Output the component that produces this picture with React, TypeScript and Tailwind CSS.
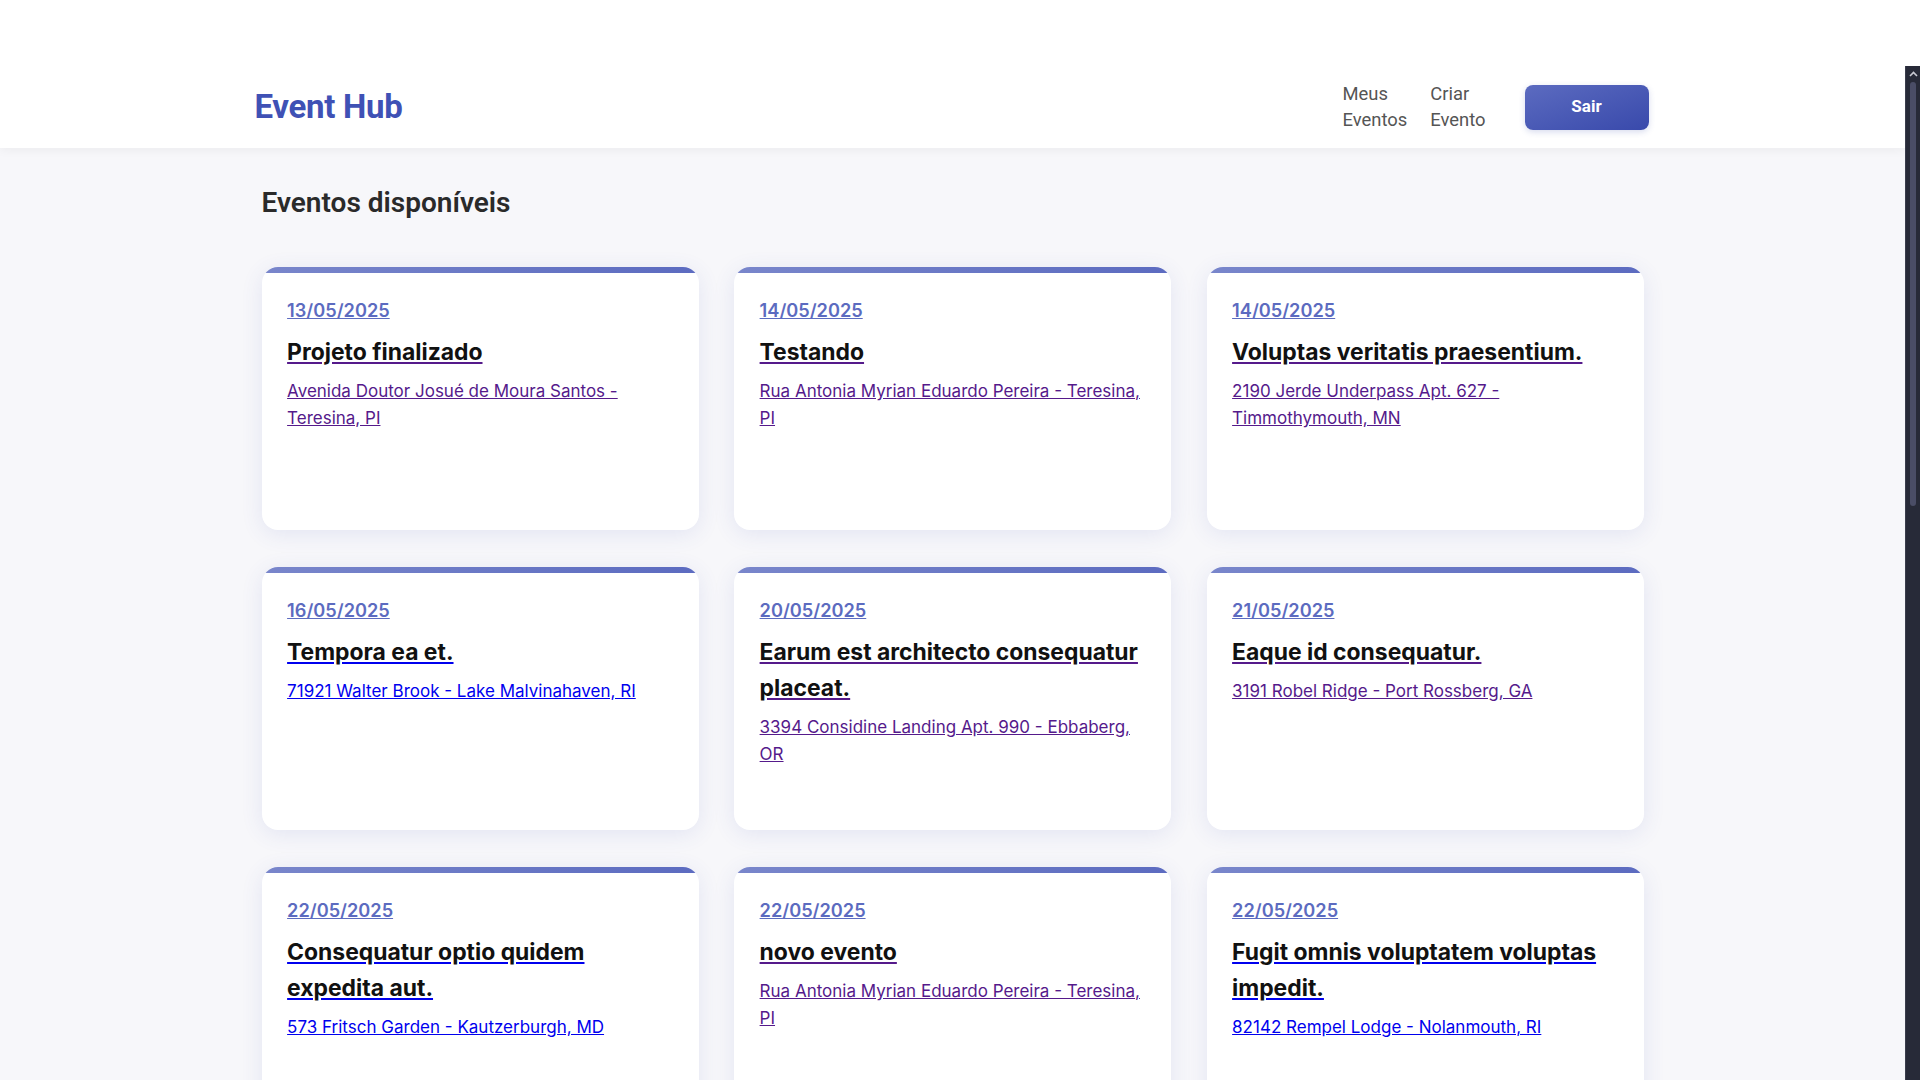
import React from 'react';

type Evento = {
  date: string;
  title: string;
  address: string;
  visited: boolean;
};

const eventos: Evento[] = [
  { date: '13/05/2025', title: 'Projeto finalizado', address: 'Avenida Doutor Josué de Moura Santos - Teresina, PI', visited: true },
  { date: '14/05/2025', title: 'Testando', address: 'Rua Antonia Myrian Eduardo Pereira - Teresina, PI', visited: true },
  { date: '14/05/2025', title: 'Voluptas veritatis praesentium.', address: '2190 Jerde Underpass Apt. 627 - Timmothymouth, MN', visited: true },
  { date: '16/05/2025', title: 'Tempora ea et.', address: '71921 Walter Brook - Lake Malvinahaven, RI', visited: false },
  { date: '20/05/2025', title: 'Earum est architecto consequatur placeat.', address: '3394 Considine Landing Apt. 990 - Ebbaberg, OR', visited: true },
  { date: '21/05/2025', title: 'Eaque id consequatur.', address: '3191 Robel Ridge - Port Rossberg, GA', visited: true },
  { date: '22/05/2025', title: 'Consequatur optio quidem expedita aut.', address: '573 Fritsch Garden - Kautzerburgh, MD', visited: false },
  { date: '22/05/2025', title: 'novo evento', address: 'Rua Antonia Myrian Eduardo Pereira - Teresina, PI', visited: true },
  { date: '22/05/2025', title: 'Fugit omnis voluptatem voluptas impedit.', address: '82142 Rempel Lodge - Nolanmouth, RI', visited: false },
];

const EventCard: React.FC<{ evento: Evento }> = ({ evento }) => {
  const link = evento.visited ? 'text-[#551a8b] decoration-[#551a8b]' : 'text-[#0000ee] decoration-[#0000ee]';
  const line = evento.visited ? 'decoration-[#551a8b]' : 'decoration-[#0000ee]';
  return (
    <a href="#" className="flex flex-col min-h-[263px] bg-white rounded-[16px] overflow-hidden shadow-[0_4px_22px_rgba(63,81,181,0.11)] font-['Inter',sans-serif]">
      <div className="h-[6px] bg-gradient-to-r from-[#7986cb] to-[#5c6bc0]" />
      <div className="px-[25.6px] pt-[22.6px] pb-[25px]">
        <div className="text-[18.2px] leading-[28.8px] font-semibold text-[#5c6bc0] underline decoration-[#5c6bc0]">{evento.date}</div>
        <h3 className={`mt-[11px] text-[22.9px] leading-[35.8px] font-bold text-[#111] underline ${line}`}>{evento.title}</h3>
        <p className={`mt-[7px] text-[17px] leading-[26.9px] underline ${link}`}>{evento.address}</p>
      </div>
    </a>
  );
};

// barra de rolagem desenhada (o navegador headless não mostra a nativa)
const ScrollBar: React.FC = () => (
  <div className="w-[15px] shrink-0 bg-[#272a38] border-l border-[#3a3d4c] flex flex-col items-center">
    <svg width="9" height="6" viewBox="0 0 9 6" className="mt-[5px]">
      <path d="M1 5 L4.5 1.5 L8 5" fill="none" stroke="#c9cad3" strokeWidth="1.6" />
    </svg>
    <div className="mt-[5px] w-[6px] h-[424px] rounded-full bg-[#4a4d66]" />
  </div>
);

export default function App() {
  return (
    <div className="h-screen flex flex-col bg-white overflow-hidden">
      <div className="h-[66px] shrink-0 bg-white" />
      <div className="flex-1 flex min-h-0">
        <div className="flex-1 overflow-hidden bg-[#f7f7fa]">
          <header className="bg-white shadow-[0_2px_10px_rgba(0,0,0,0.05)] relative">
            <div className="w-[1392px] mx-auto h-[82px] flex items-center justify-between font-['Roboto',sans-serif]">
              <h1 className="-ml-[2px] text-[33px] font-bold text-[#3f51b5] tracking-[-0.3px]">Event Hub</h1>
              <nav className="flex items-center">
                <a href="#" className="w-min text-[18.4px] leading-[26px] text-[#555]">Meus Eventos</a>
                <a href="#" className="w-min ml-[23px] text-[18.4px] leading-[26px] text-[#555]">Criar Evento</a>
                <button className="ml-[39px] w-[124px] h-[45px] rounded-[8px] bg-gradient-to-br from-[#5c6bc0] to-[#3949ab] text-white text-[17px] font-bold shadow-[0_2px_6px_rgba(57,73,171,0.2)]">
                  Sair
                </button>
              </nav>
            </div>
          </header>
          <main className="w-[1382px] mx-auto pt-[38px] pb-[40px]">
            <h2 className="font-['Roboto',sans-serif] text-[28px] leading-[34px] font-semibold text-[#2a2a2a] mb-[47px]">Eventos disponíveis</h2>
            <div className="grid grid-cols-3 gap-x-[35.5px] gap-y-[37px]">
              {eventos.map((ev, i) => (
                <EventCard key={i} evento={ev} />
              ))}
            </div>
          </main>
        </div>
        <ScrollBar />
      </div>
    </div>
  );
}
